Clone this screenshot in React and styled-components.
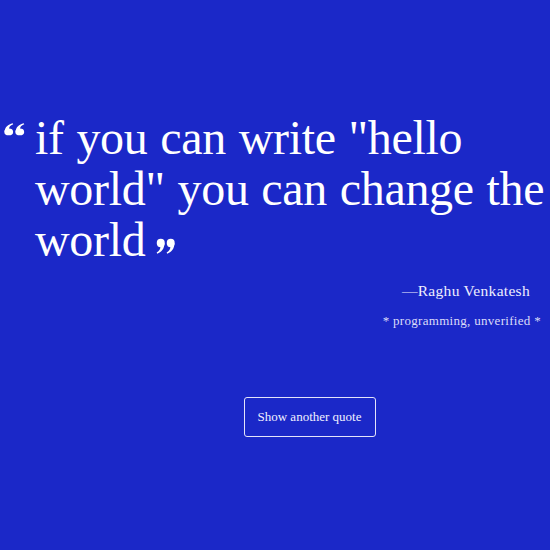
import React from 'react';
import styled, { createGlobalStyle } from 'styled-components';

const Global = createGlobalStyle`
  html, body {
    margin: 0;
    padding: 0;
    background: #1b28c8;
  }
  body {
    font-family: "Liberation Serif", "DejaVu Serif", serif;
    color: #ffffff;
  }
`

const Page = styled.div`
  width: 550px;
  height: 550px;
  overflow: hidden;
  background: #1b28c8;
  display: flex;
  flex-direction: column;
`

const QuoteBox = styled.div`
  padding: 112px 0 0 4px;
  display: flex;
  flex-direction: column;
`

const QuoteRow = styled.div`
  display: flex;
  align-items: flex-start;
`

const OpenMark = styled.span`
  width: 31px;
  flex-shrink: 0;
  padding-top: 11px;
  line-height: 0;
`

const QuoteText = styled.p`
  margin: 0;
  font-size: 48px;
  line-height: 51px;
  letter-spacing: -0.3px;
  word-spacing: 1px;
  width: 540px;
`

const CloseMark = styled.span`
  display: inline-block;
  margin-left: 10px;
  line-height: 0;
  vertical-align: 2px;
`

const Author = styled.div`
  align-self: flex-end;
  margin: 17px 20px 0 0;
  font-size: 15.5px;
  color: #eeeefe;
  letter-spacing: 0.3px;
`

const Tags = styled.div`
  align-self: flex-end;
  margin: 13px 9px 0 0;
  font-size: 13px;
  color: #dcdcf8;
  letter-spacing: 0.3px;
`

const Actions = styled.div`
  display: flex;
  justify-content: center;
  padding-top: 68px;
`

const Button = styled.button`
  width: 132px;
  height: 40px;
  background: transparent;
  border: 1.5px solid #e4e4fa;
  border-radius: 3px;
  color: #f0f0ff;
  font-family: "Liberation Serif", serif;
  font-size: 13px;
  cursor: pointer;
  margin-left: 69px;
`

const Mark = ({ flip, w, h }) => (
  <svg width={w} height={h} viewBox="0 0 20 16" preserveAspectRatio="none"
    style={flip ? { transform: 'rotate(180deg)' } : undefined}>
    <g fill="#ffffff">
      <circle cx="4.5" cy="11" r="4.2" />
      <path d="M0.6 11 C0.6 5 4 1.8 8.2 0.3 L8.8 1.6 C6 3 4.6 5 4.8 8 Z" />
      <circle cx="15" cy="11" r="4.2" />
      <path d="M11.1 11 C11.1 5 14.5 1.8 18.7 0.3 L19.3 1.6 C16.5 3 15.1 5 15.3 8 Z" />
    </g>
  </svg>
)

export default function App() {
  return (
    <Page>
      <Global />
      <QuoteBox>
        <QuoteRow>
          <OpenMark><Mark w={21} h={13} /></OpenMark>
          <QuoteText>
            if you can write "hello world" you can change the world
            <CloseMark><Mark flip w={19} h={16} /></CloseMark>
          </QuoteText>
        </QuoteRow>
        <Author>—Raghu Venkatesh</Author>
        <Tags>* programming, unverified *</Tags>
      </QuoteBox>
      <Actions>
        <Button>Show another quote</Button>
      </Actions>
    </Page>
  )
}
